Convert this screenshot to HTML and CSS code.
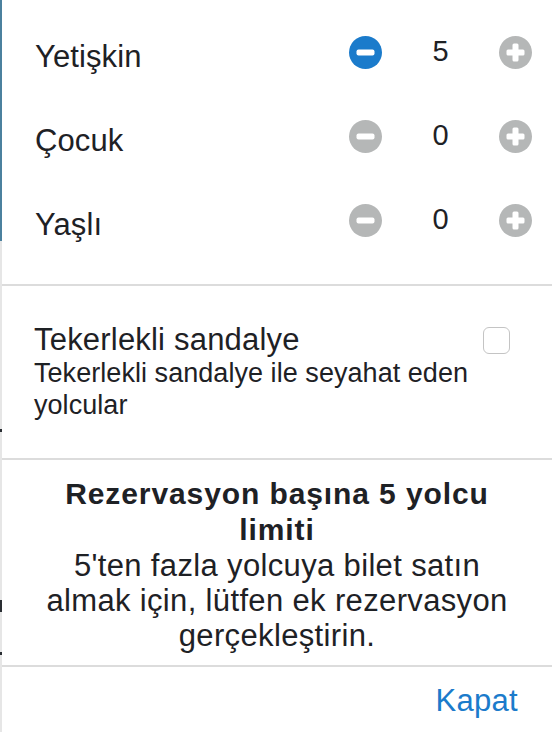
FILE: index.html
```html
<!DOCTYPE html>
<html lang="tr">
<head>
<meta charset="utf-8">
<title>Yolcular</title>
<link rel="stylesheet" href="styles.css">
</head>
<body>
<div class="screen">
  <div class="backdrop">
    <div class="backdrop-top"></div>
    <div class="backdrop-bottom">
      <span class="mark mark-a"></span>
      <span class="mark mark-b"></span>
      <span class="mark mark-c"></span>
    </div>
  </div>
  <div class="sheet">
    <section class="counters">
      <div class="counter-row">
        <span class="label">Yetişkin</span>
        <div class="stepper">
          <svg class="step-btn" viewBox="0 0 33 33" width="33" height="33"><circle cx="16.5" cy="16.5" r="16.5" fill="#1b7bcb"/><rect x="7.5" y="13.5" width="18" height="6" rx="2" fill="#fff"/></svg>
          <span class="count">5</span>
          <svg class="step-btn" viewBox="0 0 33 33" width="33" height="33"><circle cx="16.5" cy="16.5" r="16.5" fill="#b5b7b7"/><rect x="7.5" y="13.5" width="18" height="6" rx="1.5" fill="#fff"/><rect x="13.5" y="7.5" width="6" height="18" rx="1.5" fill="#fff"/></svg>
        </div>
      </div>
      <div class="counter-row">
        <span class="label">Çocuk</span>
        <div class="stepper">
          <svg class="step-btn" viewBox="0 0 33 33" width="33" height="33"><circle cx="16.5" cy="16.5" r="16.5" fill="#b5b7b7"/><rect x="7.5" y="13.5" width="18" height="6" rx="2" fill="#fff"/></svg>
          <span class="count">0</span>
          <svg class="step-btn" viewBox="0 0 33 33" width="33" height="33"><circle cx="16.5" cy="16.5" r="16.5" fill="#b5b7b7"/><rect x="7.5" y="13.5" width="18" height="6" rx="1.5" fill="#fff"/><rect x="13.5" y="7.5" width="6" height="18" rx="1.5" fill="#fff"/></svg>
        </div>
      </div>
      <div class="counter-row">
        <span class="label">Yaşlı</span>
        <div class="stepper">
          <svg class="step-btn" viewBox="0 0 33 33" width="33" height="33"><circle cx="16.5" cy="16.5" r="16.5" fill="#b5b7b7"/><rect x="7.5" y="13.5" width="18" height="6" rx="2" fill="#fff"/></svg>
          <span class="count">0</span>
          <svg class="step-btn" viewBox="0 0 33 33" width="33" height="33"><circle cx="16.5" cy="16.5" r="16.5" fill="#b5b7b7"/><rect x="7.5" y="13.5" width="18" height="6" rx="1.5" fill="#fff"/><rect x="13.5" y="7.5" width="6" height="18" rx="1.5" fill="#fff"/></svg>
        </div>
      </div>
    </section>
    <section class="wheelchair">
      <div class="wheelchair-text">
        <div class="wc-title">Tekerlekli sandalye</div>
        <div class="wc-sub">Tekerlekli sandalye ile seyahat eden yolcular</div>
      </div>
      <span class="checkbox"></span>
    </section>
    <section class="limit">
      <div class="limit-title">Rezervasyon başına 5 yolcu limiti</div>
      <div class="limit-body">5'ten fazla yolcuya bilet satın almak için, lütfen ek rezervasyon gerçekleştirin.</div>
    </section>
    <section class="actions">
      <span class="close-link">Kapat</span>
    </section>
  </div>
</div>
</body>
</html>
```

FILE: styles.css
```css
html, body {
  margin: 0;
  padding: 0;
}
body {
  width: 552px;
  height: 732px;
  overflow: hidden;
  font-family: "Liberation Sans", Arial, sans-serif;
  color: #1e2125;
  background: #ffffff;
}
.screen {
  display: flex;
  height: 732px;
}
.backdrop {
  width: 2px;
  display: flex;
  flex-direction: column;
  flex-shrink: 0;
}
.backdrop-top {
  height: 241px;
  background: #4b819e;
}
.backdrop-bottom {
  flex: 1;
  background: #e6e6e6;
  display: flex;
  flex-direction: column;
}
.mark {
  display: block;
  width: 2px;
  background: #2a2e33;
}
.mark-a { margin-top: 188px; height: 3px; }
.mark-b { margin-top: 168px; height: 12px; }
.mark-c { margin-top: 40px; height: 3px; }
.sheet {
  flex: 1;
  background: #fff;
  border-top-left-radius: 10px;
  display: flex;
  flex-direction: column;
}
.counters {
  padding: 10px 0 22px;
}
.counter-row {
  height: 84px;
  display: flex;
  align-items: center;
  justify-content: space-between;
  padding-left: 33px;
  padding-right: 20px;
}
.label {
  font-size: 31px;
  margin-top: 10px;
  letter-spacing: 0.1px;
}
.stepper {
  display: flex;
  align-items: center;
}
.step-btn {
  display: block;
}
.count {
  width: 117px;
  text-align: center;
  font-size: 29px;
  margin-top: -2px;
}
.wheelchair {
  border-top: 2px solid #dcdcdc;
  display: flex;
  align-items: flex-start;
  padding: 37px 42px 37px 32px;
  gap: 10px;
}
.wheelchair-text {
  flex: 1;
}
.wc-title {
  font-size: 31px;
  line-height: 34px;
  letter-spacing: 0.2px;
}
.wc-sub {
  font-size: 27px;
  line-height: 32px;
  letter-spacing: 0.05px;
}
.checkbox {
  width: 25px;
  height: 25px;
  border: 1px solid #c4c4c4;
  border-radius: 6px;
  margin-top: 4px;
  flex-shrink: 0;
}
.limit {
  border-top: 2px solid #dcdcdc;
  padding: 16px 30px 12px;
  text-align: center;
}
.limit-title {
  font-size: 30px;
  font-weight: bold;
  line-height: 36px;
  letter-spacing: 0.9px;
}
.limit-body {
  font-size: 31px;
  line-height: 35px;
  letter-spacing: 0.35px;
}
.actions {
  border-top: 2px solid #dcdcdc;
  display: flex;
  justify-content: flex-end;
  padding: 16px 34px 0 0;
}
.close-link {
  font-size: 31px;
  line-height: 36px;
  color: #1b7bcb;
  letter-spacing: 0.3px;
}
```
